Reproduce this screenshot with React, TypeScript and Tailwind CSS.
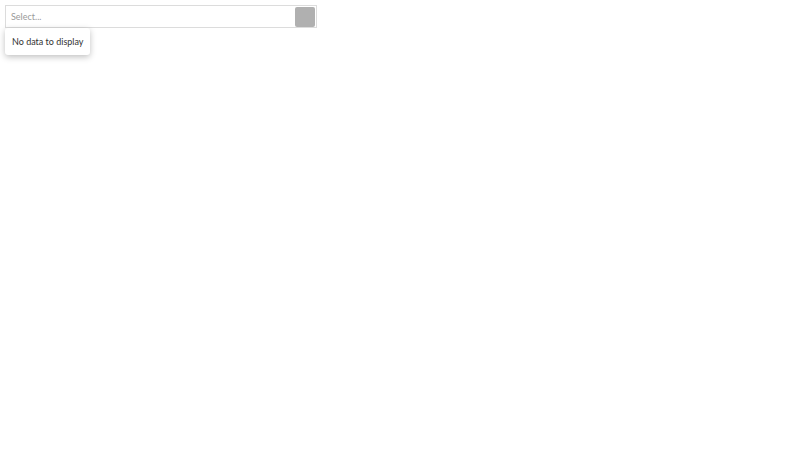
export default function App() {
  return (
    <div className="min-h-screen bg-white p-[5px] font-['Lato',sans-serif]">
      <div className="flex w-[312px] flex-col">
        <div className="flex h-[23px] items-center border border-[#dcdcdc] bg-white">
          <input
            type="text"
            placeholder="Select..."
            className="h-full min-w-0 flex-1 bg-transparent pl-[5px] text-[9px] text-[#333] outline-none placeholder:text-[#9a9a9a]"
          />
          <button className="mr-px h-[20px] w-[20px] rounded-[2px] bg-[#b0b0b0]" aria-label="Open" />
        </div>
        <div className="w-fit rounded-[3px] bg-white px-[7px] py-[6px] text-[9px] leading-[15px] text-[#333] shadow-[0_2px_6px_rgba(0,0,0,0.25)]">
          No data to display
        </div>
      </div>
    </div>
  );
}
